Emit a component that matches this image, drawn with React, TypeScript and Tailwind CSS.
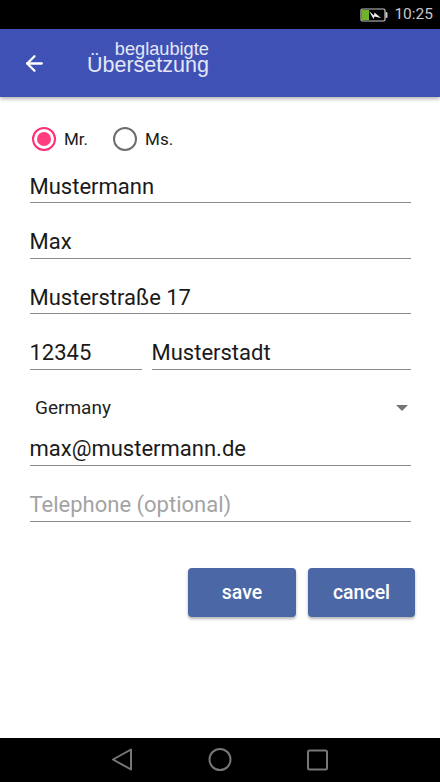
import { ArrowLeft } from 'lucide-react';

function Field({ value, placeholder, className }: { value?: string; placeholder?: string; className?: string }) {
  return (
    <div className={`flex h-[34px] items-center border-b border-[#8a8a8a] pt-[2px] text-[22px] leading-none ${value ? 'text-[#1a1a1a]' : 'text-[#a3a3a3]'} ${className ?? ''}`}>
      {value ?? placeholder}
    </div>
  );
}

function Radio({ label, checked }: { label: string; checked?: boolean }) {
  return (
    <div className="flex items-center gap-[8px]">
      <div className={`flex h-[24px] w-[24px] items-center justify-center rounded-full border-[2px] ${checked ? 'border-[#ff2d78]' : 'border-[#6e6e6e]'}`}>
        {checked && <div className="h-[14px] w-[14px] rounded-full bg-[#ff3d7f]" />}
      </div>
      <span className="text-[17px] leading-none text-[#1a1a1a]">{label}</span>
    </div>
  );
}

function StatusBar() {
  return (
    <div className="flex h-[29px] items-center justify-end gap-[6px] bg-black pr-[7px]">
      <svg width="28" height="14" viewBox="0 0 28 14">
        <rect x="1" y="1" width="24" height="12" rx="1.5" fill="none" stroke="#c9c9c9" strokeWidth="1.2" />
        <rect x="2" y="2" width="7" height="10" fill="#6fb32a" />
        <rect x="25.5" y="4" width="2" height="6" rx="1" fill="#c9c9c9" />
        <path d="M9 3 L14 7.5 L14.5 4.5 L21 10 L14.5 8.5 L13.5 11 Z" fill="#eeeeee" />
      </svg>
      <span className="text-[15.5px] leading-none text-[#c9c9c9]">10:25</span>
    </div>
  );
}

function NavBar() {
  return (
    <div className="flex h-[44px] items-center justify-center bg-black">
      <svg width="220" height="26" viewBox="0 0 220 26" fill="none" stroke="#777777" strokeWidth="2" strokeLinejoin="round">
        <path d="M3 12.5 L21 2.5 V22.5 Z" />
        <circle cx="110" cy="12.5" r="10.5" />
        <rect x="198" y="3.5" width="19" height="19" rx="1.5" />
      </svg>
    </div>
  );
}

export default function App() {
  return (
    <div className="flex h-[782px] w-[440px] flex-col bg-white font-['Roboto',sans-serif]">
      <StatusBar />

      <header className="relative z-10 flex h-[68px] items-center bg-[#3f51b5] pl-[22px] shadow-[0_2px_4px_rgba(0,0,0,0.3)]">
        <ArrowLeft className="h-[25px] w-[25px] text-white" strokeWidth={2.2} />
        <div className="mb-[12px] ml-[40px] flex flex-col items-end font-['Liberation_Sans',sans-serif] text-[#e4e7f6]">
          <span className="text-[18.2px] leading-[16px]">beglaubigte</span>
          <span className="text-[21.5px] leading-[17px]">Übersetzung</span>
        </div>
      </header>

      <main className="flex flex-1 flex-col">
        <div className="flex gap-[25px] pl-[32px] pt-[30px]">
          <Radio label="Mr." checked />
          <Radio label="Ms." />
        </div>

        <div className="flex flex-col gap-[21.5px] px-[29.5px] pt-[18px]">
          <Field value="Mustermann" />
          <Field value="Max" />
          <Field value="Musterstraße 17" />
          <div className="flex gap-[10px]">
            <Field value="12345" className="w-[112px]" />
            <Field value="Musterstadt" className="flex-1" />
          </div>
        </div>

        <div className="flex items-center justify-between pl-[35px] pr-[32px] pt-[28px] text-[19px] leading-[20px] text-[#1f1f1f]">
          <span>Germany</span>
          <div className="h-0 w-0 border-x-[6px] border-t-[6px] border-x-transparent border-t-[#757575]" />
        </div>

        <div className="flex flex-col gap-[22px] px-[29.5px] pt-[14px]">
          <Field value="max@mustermann.de" />
          <Field placeholder="Telephone (optional)" />
        </div>

        <div className="flex justify-end gap-[12px] pr-[25px] pt-[46px]">
          <button className="h-[49px] w-[108px] rounded-[4px] bg-[#4c67a6] pt-[2px] text-[19.5px] font-medium text-white shadow-[0_2px_3px_rgba(0,0,0,0.3)]">save</button>
          <button className="h-[49px] w-[107px] rounded-[4px] bg-[#4c67a6] pt-[2px] text-[19.5px] font-medium text-white shadow-[0_2px_3px_rgba(0,0,0,0.3)]">cancel</button>
        </div>
      </main>

      <NavBar />
    </div>
  );
}
